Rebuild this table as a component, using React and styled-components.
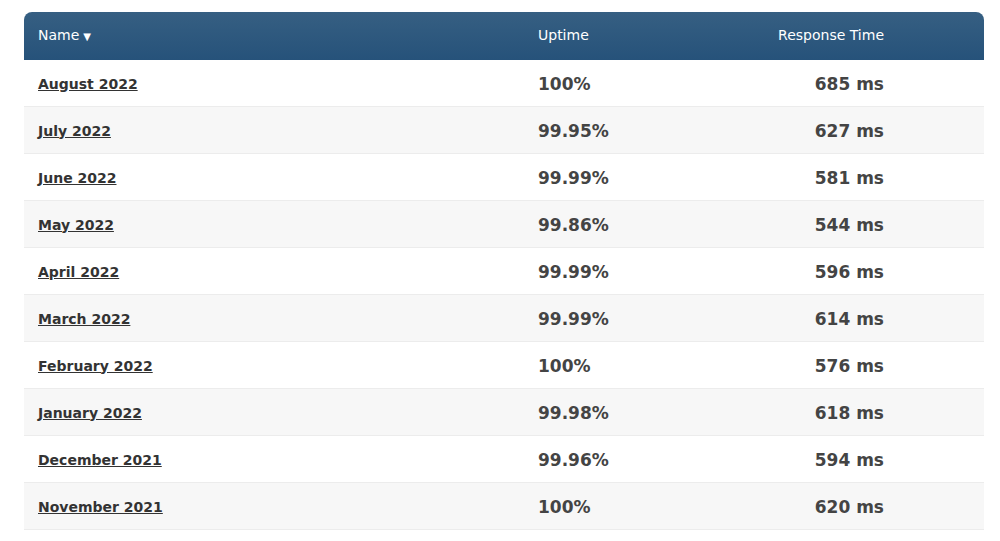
import React from "react";
import styled, { createGlobalStyle } from "styled-components";

const Global = createGlobalStyle`
  html, body { margin: 0; padding: 0; background: #fff; }
  body { font-family: "DejaVu Sans", Verdana, sans-serif; }
`;

const Page = styled.div`
  padding: 12px 16px 0 24px;
`;

const Table = styled.div`
  width: 960px;
`;

const cols = "500px 240px 134px 1fr";

const Head = styled.div`
  display: grid;
  grid-template-columns: ${cols};
  height: 48px;
  padding-bottom: 2px;
  align-items: center;
  border-radius: 8px 8px 0 0;
  background: linear-gradient(to bottom, #365f82 0%, #26527a 100%);
  color: #fff;
  font-family: "DejaVu Sans", Verdana, sans-serif;
  font-size: 14px;
  box-sizing: border-box;
`;

const HeadCell = styled.div`
  padding: 0 14px;
  text-align: ${(p) => (p.$right ? "right" : "left")};
`;

const Arrow = styled.span`
  font-size: 10px;
  margin-left: 4px;
`;

const Row = styled.div`
  display: grid;
  grid-template-columns: ${cols};
  height: 47px;
  box-sizing: border-box;
  align-items: center;
  background: ${(p) => (p.$alt ? "#f7f7f7" : "#fff")};
  border-bottom: 1px solid #ececec;
`;

const Cell = styled.div`
  padding: 0 14px;
  text-align: ${(p) => (p.$right ? "right" : "left")};
`;

const NameLink = styled.a`
  font-size: 14px;
  font-weight: bold;
  color: #333;
  text-decoration: underline;
`;

const Value = styled.span`
  display: inline-block;
  padding-top: 1px;
  font-size: 17px;
  font-weight: bold;
  color: #444;
`;

const rows = [
  ["August 2022", "100%", "685 ms"],
  ["July 2022", "99.95%", "627 ms"],
  ["June 2022", "99.99%", "581 ms"],
  ["May 2022", "99.86%", "544 ms"],
  ["April 2022", "99.99%", "596 ms"],
  ["March 2022", "99.99%", "614 ms"],
  ["February 2022", "100%", "576 ms"],
  ["January 2022", "99.98%", "618 ms"],
  ["December 2021", "99.96%", "594 ms"],
  ["November 2021", "100%", "620 ms"],
];

export default function App() {
  return (
    <>
      <Global />
      <Page>
        <Table>
          <Head>
            <HeadCell>
              Name<Arrow>▼</Arrow>
            </HeadCell>
            <HeadCell>Uptime</HeadCell>
            <HeadCell $right>Response Time</HeadCell>
            <HeadCell />
          </Head>
          {rows.map((r, i) => (
            <Row key={r[0]} $alt={i % 2 === 1}>
              <Cell>
                <NameLink href="#">{r[0]}</NameLink>
              </Cell>
              <Cell>
                <Value>{r[1]}</Value>
              </Cell>
              <Cell $right>
                <Value>{r[2]}</Value>
              </Cell>
              <Cell />
            </Row>
          ))}
        </Table>
      </Page>
    </>
  );
}
